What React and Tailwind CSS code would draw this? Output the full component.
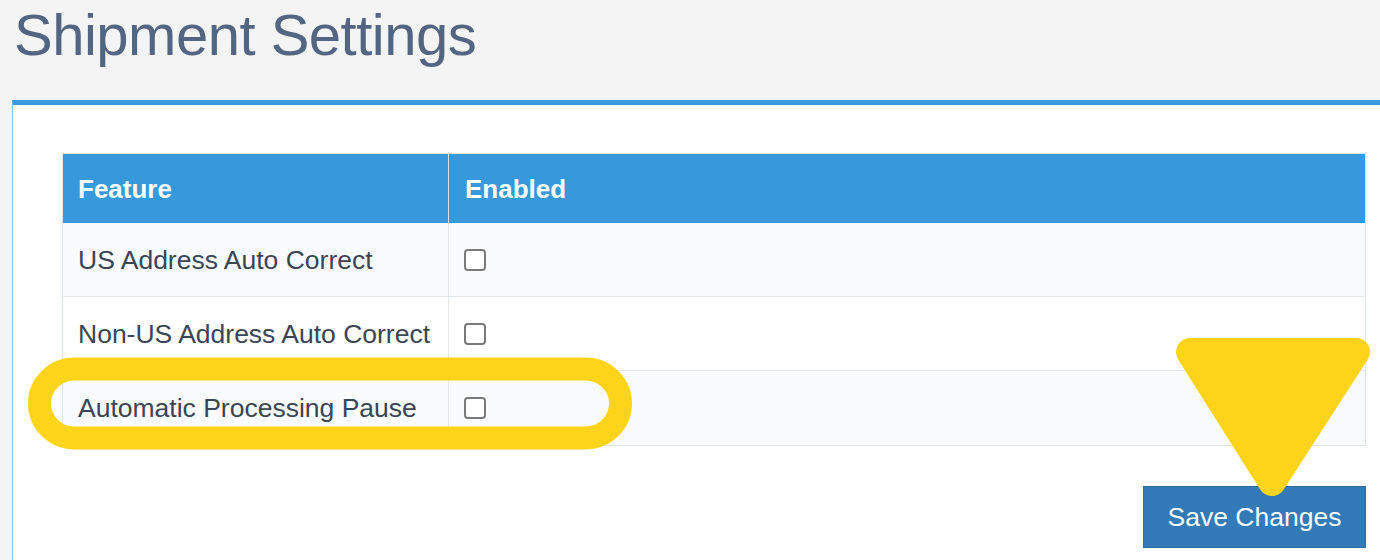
import React from "react";

function Box() {
  return <div className="w-[22px] h-[22px] rounded-[4px] border-2 border-[#7a7a7a] bg-white" />;
}

const rows = [
  { name: "US Address Auto Correct", bg: "bg-[#f9fbfd]" },
  { name: "Non-US Address Auto Correct", bg: "bg-white" },
  { name: "Automatic Processing Pause", bg: "bg-[#f9fbfd]" },
];

export default function App() {
  return (
    <div className="relative w-[1380px] h-[560px] overflow-hidden bg-[#f4f4f4] font-['Liberation_Sans',Arial,sans-serif]">
      <h1 className="h-[100px] pl-[14px] pt-[6px] text-[58px] leading-[58px] tracking-[-0.5px] text-[#536583] font-normal">
        Shipment Settings
      </h1>
      <div className="ml-[12px] h-[460px] border-t-[5px] border-t-[#3a9be0] border-l border-l-[#8cc3ee] bg-white pl-[49px] pr-[14px] pt-[48px]">
        <div className="border border-[#dce4ec]">
          <div className="grid grid-cols-[386px_1fr] h-[69px] bg-[#3798db] text-white font-bold text-[26px]">
            <div className="flex items-center pl-[15px] pt-[1px] border-r border-r-[#cfe3f5]">Feature</div>
            <div className="flex items-center pl-[16px] pt-[1px]">Enabled</div>
          </div>
          {rows.map((r, i) => (
            <div
              key={r.name}
              className={`grid grid-cols-[386px_1fr] h-[74px] ${r.bg} ${i < rows.length - 1 ? "border-b border-b-[#e4e9ee]" : ""} text-[26.5px] text-[#3c4556]`}
            >
              <div className="flex items-center pl-[15px] pt-[2px] border-r border-r-[#e4e9ee]">{r.name}</div>
              <div className="flex items-center pl-[15px]">
                <Box />
              </div>
            </div>
          ))}
        </div>
        <div className="flex justify-end mt-[40px]">
          <button className="w-[223px] h-[62px] bg-[#337ab7] border border-[#2e6da4] text-white text-[26.5px] leading-none">
            Save Changes
          </button>
        </div>
      </div>
      <svg className="absolute inset-0 pointer-events-none" width="1380" height="560" viewBox="0 0 1380 560">
        <rect x="39.5" y="369" width="581" height="69" rx="35" fill="none" stroke="#fed41b" strokeWidth="23" />
        <polygon
          points="1190,352 1356,352 1272,482"
          fill="#fed41b"
          stroke="#fed41b"
          strokeWidth="28"
          strokeLinejoin="round"
        />
      </svg>
    </div>
  );
}
